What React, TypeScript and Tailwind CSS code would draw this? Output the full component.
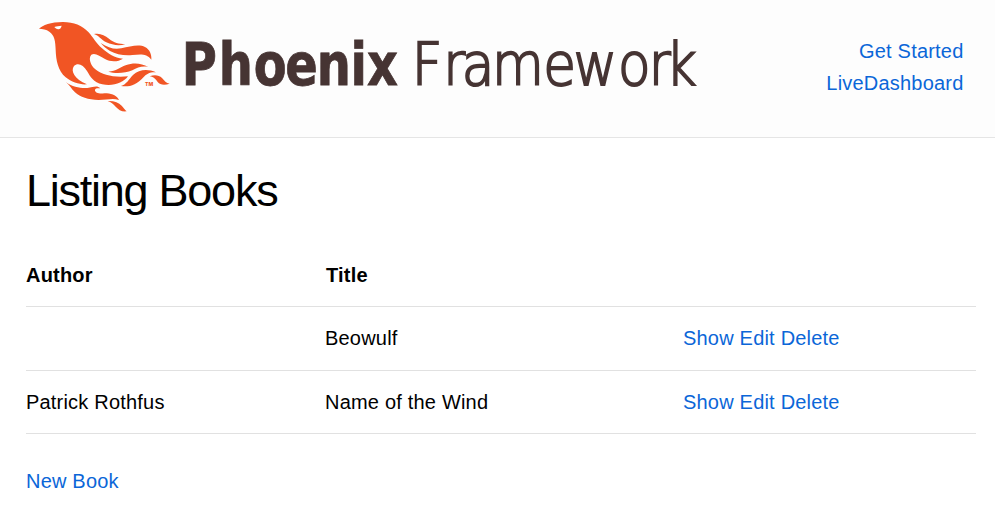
const books = [
  { author: "", title: "Beowulf" },
  { author: "Patrick Rothfus", title: "Name of the Wind" },
];

const link = "text-[#0b66d8]";

function Logo() {
  return (
    <svg className="block h-[110px] w-[680px] shrink-0 overflow-visible" viewBox="26 10 680 110" role="img" aria-label="Phoenix Framework">
      <g transform="translate(30 10) scale(.33333)" fill="#f15524">
        <path d="M27 56C38 46 62 36 99 36C132 36 156 46 175 66C190 82 199 101 216 115C235 131 253 145 279 146C264 156 241 156 225 147C209 138 195 127 184 134C174 144 182 166 196 178C218 196 252 203 294 199C280 219 250 229 217 223C190 217 181 200 171 183C160 165 144 157 132 168C121 183 133 207 171 223C151 225 125 217 107 202C84 182 78 151 77 120C76 93 74 76 58 65C49 58 38 57 27 56Z" />
        <path fill="#fff" d="M73 51C80 48 87 48 95 47C93 56 88 59 82 57C78 56 76 54 73 51Z" />
        <path d="M192 72C210 68 224 76 237 86C252 98 266 102 286 102C268 109 247 105 229 97C212 88 207 77 192 72Z" />
        <path d="M212 99C235 114 253 119 274 115C301 109 327 102 345 111C360 119 365 134 364 149C349 130 333 133 307 135C281 137 258 133 240 123C227 115 221 109 212 99Z" />
        <path d="M235 185C259 184 270 172 287 166C311 157 333 159 355 171C335 167 323 173 307 181C285 190 256 192 235 185Z" />
        <path d="M273 228C290 223 297 207 309 195C327 178 354 176 378 187C358 186 350 192 339 203C320 224 298 232 273 228Z" />
        <path d="M359 199C373 194 387 195 396 204C404 213 408 219 419 221C405 226 391 226 383 216C376 207 372 201 359 199Z" />
        <path d="M108 217C128 231 150 235 172 234C190 232 201 225 211 235C201 234 194 235 195 242C199 252 216 250 230 250C249 251 261 259 267 270C248 264 231 270 206 270C174 270 151 261 135 247C124 237 119 225 108 217Z" />
        <path d="M233 273C251 272 266 277 275 287C282 295 285 300 290 304C276 306 265 299 257 290C249 282 244 276 233 273Z" />
        <text x="345" y="229" fontFamily="Inter, sans-serif" fontWeight="800" fontSize="15" textLength="25" lengthAdjust="spacingAndGlyphs">TM</text>
      </g>
      <g fill="#463433" stroke="#463433" fontFamily="'DejaVu Sans', sans-serif" fontSize="58.5" letterSpacing="0">
        <text transform="scale(.82 1)" x="221.8 266.8 309.4 348 386.2 427.5 447.6" y="85.2" fontWeight="700" strokeWidth=".8">
          Phoenix
        </text>
        <text
          transform="scale(.91 1)"
          x="452.5 487 507.5 540.8 597 630.2 679.2 712.8 731.5"
          y="85"
          fontWeight="200"
          strokeWidth="2"
        >
          Framework
        </text>
      </g>
    </svg>
  );
}

export default function App() {
  return (
    <div className="h-[527px] overflow-hidden bg-white font-['Liberation_Sans',Arial,sans-serif] text-[20px] leading-8 tracking-[0.2px] text-black">
      <header className="flex h-[138px] items-start justify-between border-b border-[#e5e5e5] bg-[#fdfdfd] pt-[10px] pr-[31.5px] pl-[26px]">
        <Logo />
        <nav className="pt-[25px] text-right">
          <a className={`block ${link}`}>Get Started</a>
          <a className={`block ${link}`}>LiveDashboard</a>
        </nav>
      </header>
      <main className="pr-[19px] pl-[26px]">
        <h1 className="pt-[26px] text-[45px] leading-[54px] tracking-[-1.25px]">Listing Books</h1>
        <table className="mt-[25px] w-full table-fixed border-collapse text-left">
          <colgroup>
            <col className="w-[299px]" />
            <col className="w-[358px]" />
            <col />
          </colgroup>
          <thead>
            <tr className="h-[63px] border-b border-[#e1e1e1]">
              <th className="p-0 pt-0.5 font-bold">Author</th>
              <th className="p-0 pt-0.5 pl-px font-bold">Title</th>
              <th className="p-0" />
            </tr>
          </thead>
          <tbody>
            {books.map((b) => (
              <tr key={b.title} className="h-16 border-b border-[#e1e1e1] last:h-[63px]">
                <td className="p-0">{b.author}</td>
                <td className="p-0">{b.title}</td>
                <td className="p-0">
                  <a className={link}>Show</a> <a className={link}>Edit</a> <a className={link}>Delete</a>
                </td>
              </tr>
            ))}
          </tbody>
        </table>
        <a className={`mt-[31px] block ${link}`}>New Book</a>
      </main>
    </div>
  );
}
